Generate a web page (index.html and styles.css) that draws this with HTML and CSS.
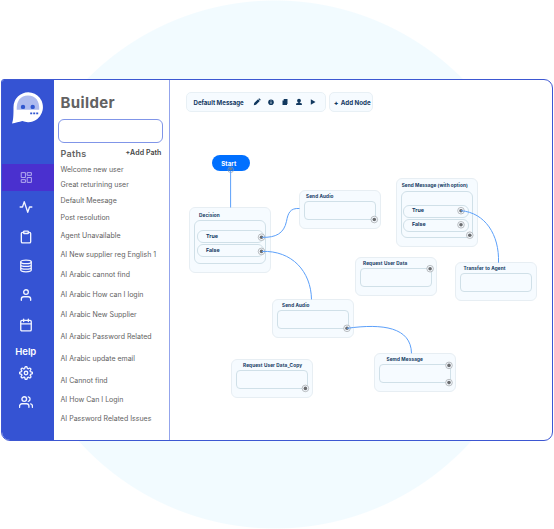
FILE: index.html
```html
<!DOCTYPE html>
<html lang="en">
<head>
<meta charset="utf-8">
<title>Builder</title>
<link rel="stylesheet" href="styles.css">
</head>
<body>
<main class="stage">
  <div class="window">
    <nav class="rail">
      <svg class="logo" viewBox="0 0 32 32"><path fill="#fff" d="M16.3.2a15 15 0 1 1-6 28.9C7.200 30 3.500 31 0 31.600 1.300 28 1.500 24 1.500 15A15 15 0 0 1 16.300.2z"/><path fill="#aebbef" d="M4.700 17.800C4.300 9 8.500 3.500 16 3.500S27.700 9 27.200 17.800z"/><g fill="#3157cf"><circle cx="11" cy="14.900" r="2.200"/><circle cx="20.700" cy="14.900" r="2.200"/><path d="M18.200 20.400h2v1.800h-2zm3 0h2v1.800h-2zm3 0h2v1.800h-2z"/></g></svg>
      <a class="item active"><svg class="icon thin" viewBox="0 0 24 24"><path d="M3 3h7v9H3zM14 3h7v5h-7zM14 12h7v9h-7zM3 16h7v5H3z"/></svg></a>
      <a class="item"><svg class="icon" viewBox="0 0 24 24"><path d="M22 12h-4l-3 9L9 3l-3 9H2"/></svg></a>
      <a class="item"><svg class="icon" viewBox="0 0 24 24"><path d="M16 4h2a2 2 0 0 1 2 2v14a2 2 0 0 1-2 2H6a2 2 0 0 1-2-2V6a2 2 0 0 1 2-2h2"/><rect x="8" y="2" width="8" height="4" rx="1"/></svg></a>
      <a class="item"><svg class="icon" viewBox="0 0 24 24"><ellipse cx="12" cy="5" rx="9" ry="3"/><path d="M21 9.700c0 1.660-4 3-9 3s-9-1.340-9-3M21 14.400c0 1.660-4 3-9 3s-9-1.340-9-3M3 5v14c0 1.660 4 3 9 3s9-1.340 9-3V5"/></svg></a>
      <a class="item"><svg class="icon" viewBox="0 0 24 24"><path d="M20 21v-2a4 4 0 0 0-4-4H8a4 4 0 0 0-4 4v2"/><circle cx="12" cy="7" r="4"/></svg></a>
      <a class="item"><svg class="icon" viewBox="0 0 24 24"><rect x="3" y="4" width="18" height="18" rx="2"/><path d="M16 2v4M8 2v4M3 10h18"/></svg></a>
      <span class="help">Help</span>
      <a class="item small"><svg class="icon" viewBox="0 0 24 24"><circle cx="12" cy="12" r="3"/><path d="M19.400 15a1.650 1.650 0 0 0 .33 1.820l.06.06a2 2 0 1 1-2.830 2.830l-.06-.06a1.650 1.650 0 0 0-2.800 1.170V21a2 2 0 0 1-4 0v-.09A1.650 1.650 0 0 0 7.200 19.730l-.06.06a2 2 0 1 1-2.830-2.830l.06-.06A1.650 1.650 0 0 0 3.090 14H3a2 2 0 0 1 0-4h.09A1.650 1.650 0 0 0 4.270 7.200l-.06-.06a2 2 0 1 1 2.830-2.830l.06.06A1.650 1.650 0 0 0 10 3.090V3a2 2 0 0 1 4 0v.09a1.650 1.650 0 0 0 2.800 1.180l.06-.06a2 2 0 1 1 2.830 2.830l-.06.06A1.650 1.650 0 0 0 20.910 10H21a2 2 0 0 1 0 4h-.09a1.650 1.650 0 0 0-1.510 1z"/></svg></a>
      <a class="item"><svg class="icon" viewBox="0 0 24 24"><path d="M17 21v-2a4 4 0 0 0-4-4H5a4 4 0 0 0-4 4v2"/><circle cx="9" cy="7" r="4"/><path d="M23 21v-2a4 4 0 0 0-3-3.870M16 3.130a4 4 0 0 1 0 7.750"/></svg></a>
    </nav>

    <aside class="panel">
      <h1>Builder</h1>
      <div class="search"></div>
      <div class="paths-head"><h2>Paths</h2><span class="add-path">+Add Path</span></div>
      <ul class="paths">
        <li>Welcome new user</li>
        <li>Great returining user</li>
        <li>Default Meesage</li>
        <li>Post resolution</li>
        <li>Agent Unavailable</li>
        <li>AI New supplier reg English 1</li>
        <li>AI Arabic cannot find</li>
        <li>AI Arabic How can I login</li>
        <li>AI Arabic New Supplier</li>
        <li>AI Arabic Password Related</li>
        <li>AI Arabic update email</li>
        <li>AI Cannot find</li>
        <li>AI How Can I Login</li>
        <li>AI Password Related Issues</li>
      </ul>
    </aside>

    <section class="canvas">
      <header class="bar">
        <div class="tools">
          <span class="tools-title">Default Message</span>
          <svg viewBox="0 0 8 8"><path d="M.8 7.200l.4-2.200L5 1.200 6.800 3 3 6.800zM5.400.9l.8-.7L7.800 1.800l-.7.8z"/></svg>
          <svg viewBox="0 0 8 8"><circle cx="4" cy="4.200" r="2.800"/><path class="cut" d="M3.600 2.500h.8v.8h-.8zm0 1.300h.8v2h-.8z"/></svg>
          <svg viewBox="0 0 8 8"><path d="M2.700 1h3.800v5H6v1H1.500V2.500h1.200z"/></svg>
          <svg viewBox="0 0 8 8"><circle cx="4" cy="2.700" r="1.900"/><path d="M3.300 4h1.400v.8l2.200.8v1.300H1.100V5.600l2.200-.8z"/></svg>
          <svg viewBox="0 0 8 8"><path d="M1.800 1.200L6.500 4 1.800 6.800z"/></svg>
        </div>
        <div class="add-node"><b>+</b><span>Add Node</span></div>
      </header>

      <div class="start">Start</div>

      <div class="node tall decision">
        <h3>Decision</h3>
        <div class="box"><div class="row">True</div><div class="row">False</div></div>
      </div>
      <div class="node audio-a"><h3>Send Audio</h3><div class="box"></div></div>
      <div class="node tall option">
        <h3>Send Message (with option)</h3>
        <div class="box"><div class="row">True</div><div class="row">False</div></div>
      </div>
      <div class="node request"><h3>Request User Data</h3><div class="box"></div></div>
      <div class="node transfer"><h3>Transfer to Agent</h3><div class="box"></div></div>
      <div class="node audio-b"><h3>Send Audio</h3><div class="box"></div></div>
      <div class="node copy"><h3>Request User Data_Copy</h3><div class="box"></div></div>
      <div class="node message"><h3>Semd Message</h3><div class="box"></div></div>

      <svg class="links" viewBox="170 80 382 360">
        <defs><g id="port"><circle r="3.300" fill="#f5faff" stroke="#a9adb1" stroke-width=".8"/><circle r="1.800" fill="#6b6d70"/></g></defs>
        <g class="ports">
          <use href="#port" x="261.500" y="237.200"/><use href="#port" x="261.500" y="251.400"/>
          <use href="#port" x="374.300" y="219.500"/>
          <use href="#port" x="461" y="210.700"/><use href="#port" x="461" y="224.800"/><use href="#port" x="469.800" y="235.200"/>
          <use href="#port" x="430.100" y="268.700"/>
          <use href="#port" x="347" y="328.300"/>
          <use href="#port" x="305.400" y="388.400"/>
          <use href="#port" x="449" y="365.400"/><use href="#port" x="449" y="382.600"/>
        </g>
        <circle cx="230.700" cy="169.700" r="2.800" fill="none" stroke="#8798ad" stroke-width=".7"/>
        <circle cx="230.700" cy="169" r="1.600" fill="#6c7f96"/>
        <g class="wires">
          <path d="M230.600 171v36.500"/>
          <path d="M262 237.300c14 .5 22-4 24.500-16 1.500-8 3.500-13.500 13-12.800"/>
          <path d="M262 251.400c30-1 49 20 49.500 48"/>
          <path d="M461 210.700c24 2 38.500 24 37.500 52"/>
          <path d="M347 328.300c36-5 64-1 64.500 25"/>
        </g>
      </svg>
    </section>
  </div>
</main>
</body>
</html>
```

FILE: styles.css
```css
* { box-sizing: border-box; }

body {
  margin: 0;
  background: #fff;
  font-family: Inter, "Liberation Sans", sans-serif;
}

h1, h2, h3, ul { margin: 0; padding: 0; }

.stage {
  width: 554px;
  height: 529px;
  padding: 79px 1px 88px;
  overflow: hidden;
  background: radial-gradient(circle at 275px 264.5px, #f2fbff 263.500px, #fff 264.500px);
}

.window {
  display: flex;
  height: 362px;
  overflow: hidden;
  background: #fff;
  border: 1px solid #3d57d2;
  border-radius: 3px 9px 9px 9px;
}

/* Icon rail */
.rail {
  display: flex;
  flex-direction: column;
  align-items: center;
  flex: 0 0 51.5px;
  background: #3553d3;
}

.logo { width: 32px; height: 32px; margin: 12px 0 40px; }

.item {
  display: flex;
  align-items: center;
  justify-content: center;
  width: 100%;
  height: 29.4px;
  padding-right: 3.5px;
}

.item.active { height: 27px; margin-bottom: 1.5px; padding-right: 3px; background: #4a30cf; }
.item.small { height: 22px; margin-bottom: 3px; }

.icon {
  width: 14px;
  height: 14px;
  fill: none;
  stroke: #f1f4ff;
  stroke-width: 2.3;
  stroke-linecap: round;
  stroke-linejoin: round;
}

.icon.thin { width: 13px; height: 13px; stroke: #b5aef0; stroke-width: 1.8; }

.help {
  height: 22px;
  margin-top: 1px;
  padding-right: 4px;
  color: #fff;
  font-size: 9.5px;
  font-weight: 600;
  line-height: 23px;
}

/* Path panel */
.panel {
  flex: 0 0 116.5px;
  padding: 13px 6px 0 4.5px;
  border-right: 1px solid #93a4ec;
  color: #626262;
}

.panel h1 {
  padding-left: 2.5px;
  font-size: 15px;
  font-weight: 700;
  letter-spacing: .38px;
  line-height: 20px;
}

.search {
  height: 24px;
  margin-top: 6px;
  border: 1px solid #8095e8;
  border-radius: 6px;
}

.paths-head {
  display: flex;
  justify-content: space-between;
  margin-top: 5px;
  padding: 0 1.500px 0 2.500px;
}

.paths-head h2 { font-size: 9px; font-weight: 600; letter-spacing: .3px; line-height: 12px; }
.add-path { color: #444; font-size: 7px; font-weight: 600; letter-spacing: .08px; line-height: 10px; }

.paths {
  display: grid;
  grid-template-rows: 15px 16px 17px 18px 19px 20px 20px 20px 22px 22px 22px 19px 19px 12px;
  margin-top: 4px;
  padding-left: 2.5px;
  list-style: none;
  font-size: 7px;
  line-height: 12px;
  white-space: nowrap;
}

/* Flow canvas */
.canvas {
  position: relative;
  flex: 1;
  padding: 12px 0 0 15.5px;
  color: #12395f;
}

.bar { display: flex; gap: 3.5px; }

.tools, .add-node {
  display: flex;
  align-items: center;
  height: 20px;
  background: #f6fbff;
  border: 1px solid #e8f0f5;
  border-radius: 5px;
}

.tools { width: 140px; padding-left: 7px; gap: 6.2px; }
.tools-title { width: 53px; font-size: 6.1px; font-weight: 700; white-space: nowrap; }
.tools svg { flex: none; width: 8px; height: 8px; fill: #12395f; }
.tools .cut { fill: #f6fbff; }

.add-node { width: 44px; padding-left: 4px; gap: 2.5px; font-size: 6.2px; font-weight: 700; white-space: nowrap; }

.start {
  position: absolute;
  left: 41.5px;
  top: 75px;
  width: 38.5px;
  height: 16px;
  padding-right: 4px;
  border-radius: 8px;
  background: #0070ff;
  color: #fff;
  font-size: 6.2px;
  font-weight: 700;
  line-height: 17px;
  text-align: center;
}

.node {
  position: absolute;
  display: flex;
  flex-direction: column;
  width: 82px;
  height: 39px;
  padding: 2px 4px 8px;
  background: #f6fbff;
  border: 1px solid #e7eef3;
  border-radius: 6px;
}

.node h3 {
  height: 8px;
  font-size: 4.7px;
  font-weight: 700;
  letter-spacing: .12px;
  line-height: 7px;
  white-space: nowrap;
}

.box {
  flex: 1;
  border: 1px solid #d0e0e8;
  border-radius: 4px;
}

.tall .box {
  display: flex;
  flex-direction: column;
  justify-content: flex-end;
  gap: 1px;
  padding: 0 1px 6px 2px;
  border-radius: 6px;
}

.row {
  height: 13px;
  padding-left: 8px;
  border: 1px solid #d0e0e8;
  border-radius: 6px;
  font-size: 5.3px;
  font-weight: 700;
  line-height: 10px;
}

.decision { left: 19px; top: 127px; height: 66px; padding-top: 4px; }
.decision h3 { height: 8px; padding-left: 5px; line-height: 6px; }
.audio-a { left: 129px; top: 110px; }
.audio-a h3 { padding-left: 2px; }
.option { left: 226px; top: 98px; height: 69px; padding-top: 3px; }
.option h3 { height: 9px; padding-left: .7px; letter-spacing: .08px; }
.option .box { padding: 0 3px 5px 1px; }
.option .row { line-height: 9px; }
.request { left: 185px; top: 177px; }
.request h3 { padding-left: 3px; }
.transfer { left: 285px; top: 182px; }
.transfer h3 { padding-left: 3.500px; }
.audio-b { left: 102px; top: 219px; }
.audio-b h3 { padding-left: 5px; }
.copy { left: 60.5px; top: 279px; }
.copy h3 { padding-left: 7.500px; }
.message { left: 204px; top: 273px; }
.message h3 { padding-left: 7.500px; }

.links { position: absolute; left: 0; top: 0; width: 382px; height: 360px; }
.wires { fill: none; stroke: #5ca0fa; stroke-width: 1; }
```
